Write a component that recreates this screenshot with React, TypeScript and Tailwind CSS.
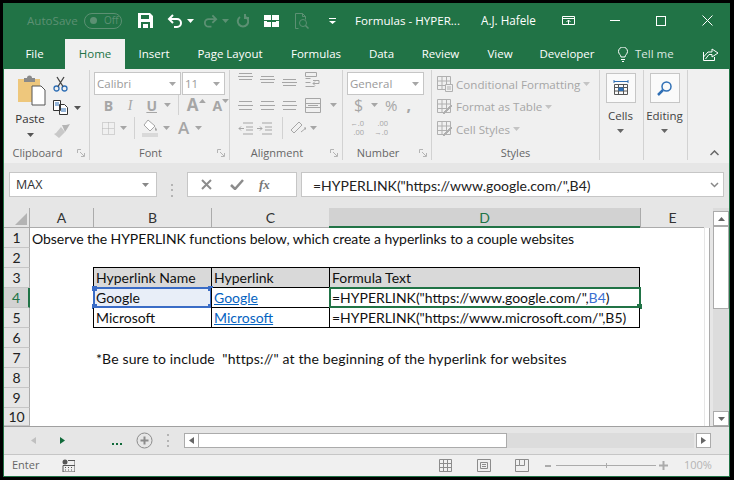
const UI = "font-['Open_Sans','Noto_Sans',sans-serif]";
const CELL = "font-['Lato','Open_Sans',sans-serif] text-[14px]";

const GREY = "#a6a6a6";

function Caret({ color = "#a6a6a6", className = "" }: { color?: string; className?: string }) {
  return (
    <svg width="7" height="4" viewBox="0 0 7 4" className={className}>
      <path d="M0 0h7L3.5 4z" fill={color} />
    </svg>
  );
}

function Launcher({ color = "#b4b4b4" }: { color?: string }) {
  return (
    <svg width="8" height="8" viewBox="0 0 8 8" fill="none" stroke={color}>
      <path d="M.5 4V.5H4M3 3l4 4M7.5 4v3.5H4" />
    </svg>
  );
}

function TitleIcons() {
  const dim = "#5c9073";
  return (
    <div className="flex items-center">
      <div className="ml-[23px] w-[50px] text-[11.6px] whitespace-nowrap text-[#5c9073]">AutoSave</div>
      <div className="ml-[7px] flex h-[16px] w-[38px] items-center rounded-full border border-[#5c9073] pl-[5px] text-[10px] text-[#5c9073]">
        <span className="h-[7px] w-[7px] rounded-full bg-[#5c9073]" />
        <span className="ml-[7px]">Off</span>
      </div>
      {/* save */}
      <svg width="15" height="15" viewBox="0 0 15 15" className="ml-[16px]">
        <path d="M0 0h12l3 3v12H0z" fill="#fff" />
        <path d="M3 2h8v4H3z" fill="#217346" />
        <path d="M3 9h9v6H3z" fill="#217346" />
        <path d="M5 11h5v4H5z" fill="#fff" />
      </svg>
      {/* undo */}
      <svg width="16" height="14" viewBox="0 0 16 14" fill="none" stroke="#fff" strokeWidth="2" className="ml-[14px]">
        <path d="M6 1 2 5l4 4M2 5h8a4 4 0 0 1 0 8H7" />
      </svg>
      <Caret color="#fff" className="ml-[4px]" />
      {/* redo */}
      <svg width="15" height="14" viewBox="0 0 16 14" fill="none" stroke={dim} strokeWidth="2" className="ml-[9px]">
        <path d="m10 1 4 4-4 4M14 5H6a4 4 0 0 0 0 8h3" />
      </svg>
      <Caret color={dim} className="ml-[4px]" />
      {/* repeat */}
      <svg width="13" height="14" viewBox="0 0 13 14" fill="none" stroke={dim} strokeWidth="2" className="ml-[7px]">
        <path d="M4 3a5.2 5.2 0 1 0 6 0M9 0v4h4" />
      </svg>
      {/* borders */}
      <svg width="15" height="12" viewBox="0 0 15 12" className="ml-[15px]">
        <path d="M0 0h7v5H0zM8 0h7v5H8zM0 6h7v6H0zM8 6h7v6H8z" fill="#fff" />
        <path d="M3 6h9v1H3z" fill="#217346" />
      </svg>
      {/* print preview */}
      <svg width="15" height="16" viewBox="0 0 15 16" fill="none" stroke={dim} className="ml-[16px]">
        <path d="M.5 15.500V.5h7l3 3v3M.5 15.500h3M7.500 .5v3h3" />
        <circle cx="8" cy="10" r="3.500" />
        <path d="m10.500 12.500 3 3" strokeWidth="1.500" />
      </svg>
      <svg width="7" height="6" viewBox="0 0 7 6" className="ml-[19px]">
        <path d="M0 0h7v1H0zM0 3h7L3.500 6z" fill="#fff" />
      </svg>
      <div className="ml-[19px] w-[105px] text-[11.6px] whitespace-nowrap text-white">Formulas - HYPER...</div>
      <div className="ml-[21px] w-[55px] text-[11.7px] whitespace-nowrap text-white">A.J. Hafele</div>
      <svg width="13" height="9" viewBox="0 0 13 9" fill="none" stroke="#fff" className="ml-[26px]">
        <path d="M.5.500h12v8H.5zM.5 2.500h12M6.500 8V4M4.500 6l2-2 2 2" />
      </svg>
      <div className="ml-[35px] h-px w-[10px] bg-white" />
      <div className="ml-[36px] h-[10px] w-[10px] border border-white" />
      <svg width="11" height="11" viewBox="0 0 11 11" stroke="#fff" className="ml-[36px]">
        <path d="m.5.500 10 10M10.500.500l-10 10" />
      </svg>
    </div>
  );
}

function TabBar() {
  const tabs: [string, string][] = [
    ["File", "w-[61px]"],
    ["Home", "w-[60px] bg-[#f0f0f0] !text-[#217346]"],
    ["Insert", "w-[58px]"],
    ["Page Layout", "w-[94px]"],
    ["Formulas", "w-[78px]"],
    ["Data", "w-[53px]"],
    ["Review", "w-[65px]"],
    ["View", "w-[54px]"],
    ["Developer", "w-[80px]"],
  ];
  return (
    <div className="flex h-[30px] items-stretch text-[11.5px] text-white">
      {tabs.map(([label, cls]) => (
        <div key={label} className={`flex items-center justify-center whitespace-nowrap ${cls}`}>
          {label}
        </div>
      ))}
      <svg width="10" height="15" viewBox="0 0 10 15" fill="none" stroke="#fff" className="ml-[11px] self-center">
        <path d="M3 10C3 8 .5 7 .5 4.500a4.500 4.500 0 0 1 9 0C9.500 7 7 8 7 10zM3 12.500h4M4 14.500h2" />
      </svg>
      <div className="ml-[7px] flex items-center whitespace-nowrap text-[#dce9e2]">Tell me</div>
      <svg width="16" height="14" viewBox="0 0 16 14" fill="none" stroke="#fff" className="ml-[29px] self-center">
        <path d="M.5 5v8.500h11V10M.5 10 5 5h4V2l6 4-6 4V7.500H6L2.500 12" />
      </svg>
    </div>
  );
}

function Group({ w, label, launcher, children }: { w: string; label: string; launcher?: boolean; children: React.ReactNode }) {
  return (
    <div className={`flex h-[90px] shrink-0 flex-col border-r border-[#d2d2d2] ${w}`}>
      <div className="h-[76px] overflow-visible">{children}</div>
      <div className={`relative flex h-[14px] items-center justify-center text-[11px] whitespace-nowrap text-[#666] ${launcher ? "pr-[18px]" : ""}`}>
        {label}
        {launcher && (
          <span className="absolute right-[4px] top-[3px] flex">
            <Launcher />
          </span>
        )}
      </div>
    </div>
  );
}

function ClipboardGroup() {
  return (
    <div className="flex pl-[13px] pt-[5px]">
      <div className="flex w-[29px] flex-col items-center">
        <svg width="29" height="31" viewBox="0 0 29 31" className="shrink-0">
          <path d="M1 4h22v23H1z" fill="#eec77c" />
          <path d="M7 3h3a2.500 2.500 0 0 1 5 0h3v4H7z" fill="#8a8a8a" />
          <path d="M15 11h9l4 4v15H15z" fill="#fff" stroke="#555" />
        </svg>
        <div className="mr-[3px] mt-[4px] text-[11.5px] leading-[18px] text-[#333]">Paste</div>
        <Caret color="#555" className="mr-[3px] mt-[5px]" />
      </div>
      <div className="ml-[7px] flex flex-col pt-[1px]">
        <svg width="15" height="16" viewBox="0 0 15 16" fill="none" stroke="#2f6fb5" strokeWidth="1.300">
          <circle cx="3.500" cy="12.500" r="2.500" />
          <circle cx="11.500" cy="12.500" r="2.500" />
          <path d="M5 10.500 11 1M10 10.500 4 1" stroke="#444" />
        </svg>
        <div className="mt-[8px] flex items-center">
          <svg width="15" height="15" viewBox="0 0 15 15" fill="#fff" stroke="#333">
            <path d="M.5.500h7v10h-7zM6.500 4.500h5l3 3v7h-8z" />
            <path d="M2 3h4M2 5h4M8 9h5M8 11h5" stroke="#2f6fb5" />
          </svg>
          <Caret color="#555" className="ml-[6px]" />
        </div>
        <svg width="17" height="14" viewBox="0 0 17 14" className="mt-[9px]">
          <path d="M9 1h4l4-1-3 5-2 3z" fill="#b5b5b5" />
          <path d="M8 3 12 8 6 14 1 10l2-1z" fill="#c8c8c8" />
        </svg>
      </div>
    </div>
  );
}

function BoxField({ w, text }: { w: string; text: string }) {
  return (
    <div className={`flex h-[23px] items-center justify-between border border-[#c6c6c6] bg-white pl-[2px] pr-[4px] text-[11.5px] text-[#9a9a9a] ${w}`}>
      <span>{text}</span>
      <Caret />
    </div>
  );
}

function FontGroup() {
  return (
    <div className="flex flex-col pl-[4px] pt-[2px]">
      <div className="flex gap-[1px]">
        <BoxField w="w-[87px]" text="Calibri" />
        <BoxField w="w-[43px]" text="11" />
      </div>
      <div className="flex h-[20px] items-center text-[14px] text-[#a6a6a6]">
        <span className="ml-[6px] w-[17px] text-center font-bold">B</span>
        <span className="ml-[5px] w-[17px] text-center font-['Liberation_Serif',serif] italic">I</span>
        <span className="ml-[5px] w-[17px] text-center font-bold underline">U</span>
        <Caret className="ml-[4px]" />
        <div className="ml-[7px] h-[20px] w-px bg-[#d2d2d2]" />
        <span className="ml-[8px] text-[17px] font-bold">A</span>
        <Caret className="mb-[9px] rotate-180" />
        <span className="ml-[7px] text-[14px] font-bold">A</span>
        <Caret className="mb-[9px]" />
      </div>
      <div className="mt-[2px] flex h-[22px] items-center text-[#a6a6a6]">
        <svg width="13" height="13" viewBox="0 0 13 13" fill="none" stroke="#b4b4b4" strokeDasharray="1 1" className="ml-[8px]">
          <path d="M.5.500h12v12H.5zM6.500.500v12M.5 6.500h12" />
        </svg>
        <Caret className="ml-[5px]" />
        <div className="ml-[7px] h-[22px] w-px bg-[#d2d2d2]" />
        <svg width="16" height="18" viewBox="0 0 16 18" className="ml-[7px]">
          <path d="m6 1 7 6-5 5-6-6z" fill="#fff" stroke="#a6a6a6" />
          <path d="M13 8c1 1 2 2 2 3s-2 1-2 0z" fill="#a6a6a6" />
          <path d="M0 14h16v4H0z" fill="#d9d9d9" />
        </svg>
        <Caret className="ml-[5px]" />
        <span className="ml-[8px] text-[17px] font-semibold">A</span>
        <Caret className="ml-[6px]" />
      </div>
    </div>
  );
}

function Lines({ rows }: { rows: number[] }) {
  return (
    <svg width="15" height="15" viewBox="0 0 15 15" stroke={GREY}>
      {rows.map((y, i) => (
        <path key={y} d={`M${i === 1 ? 0 : 1} ${y + 0.5}h${i === 1 ? 15 : 13}`} />
      ))}
    </svg>
  );
}

function AlignmentGroup() {
  return (
    <div className="flex flex-col pl-[8px] pt-[2px]">
      <div className="flex h-[15px] items-center gap-[7px]">
        <Lines rows={[1, 4, 7]} />
        <Lines rows={[4, 7, 10]} />
        <Lines rows={[7, 10, 13]} />
        <svg width="16" height="16" viewBox="0 0 16 16" fill="none" stroke={GREY} className="ml-[1px]">
          <path d="M.5.500h11v4H.5zM.5 6.500h5M.5 10.500h5M.5 14.500h9M8 8.500h6v3H8M10 9.500l-2 2 2 2" />
        </svg>
      </div>
      <div className="mt-[8px] flex h-[20px] items-center gap-[7px]">
        <Lines rows={[3, 7, 11]} />
        <Lines rows={[3, 7, 11]} />
        <Lines rows={[3, 7, 11]} />
        <svg width="16" height="15" viewBox="0 0 16 15" fill="none" stroke={GREY} className="ml-[1px]">
          <path d="M.5.500h15v14H.5zM.5 5.500h15M.5 9.500h15M3 7.500h10" />
        </svg>
        <Caret className="ml-[2px]" />
      </div>
      <div className="mt-[2px] flex h-[22px] items-center">
        <svg width="15" height="13" viewBox="0 0 15 13" fill="none" stroke={GREY}>
          <path d="M5 1h10M8 5h7M8 8h7M5 12h10M6 6.500H1M3 4.500l-2 2 2 2" />
        </svg>
        <svg width="15" height="13" viewBox="0 0 15 13" fill="none" stroke={GREY} className="ml-[4px]">
          <path d="M5 1h10M8 5h7M8 8h7M5 12h10M0 6.500h5M3 4.500l2 2-2 2" />
        </svg>
        <div className="ml-[10px] h-[22px] w-px bg-[#d2d2d2]" />
        <svg width="16" height="15" viewBox="0 0 16 15" fill="none" stroke={GREY} className="ml-[7px]">
          <path d="m1 9 8-8 3 3-8 8zM11 11l5-4M14 7h2v2" />
        </svg>
        <Caret className="ml-[4px]" />
      </div>
    </div>
  );
}

function NumberGroup() {
  return (
    <div className="flex flex-col pl-[4px] pt-[2px]">
      <BoxField w="w-[77px]" text="General" />
      <div className="flex h-[20px] items-center text-[16px] text-[#a6a6a6]">
        <span className="ml-[7px] w-[9px] text-center">$</span>
        <Caret className="ml-[8px]" />
        <span className="ml-[7px] text-[15px]">%</span>
        <span className="ml-[9px] font-bold">,</span>
      </div>
      <div className="mt-[2px] flex h-[22px] items-center text-[7.5px] leading-[9px] whitespace-nowrap text-[#a6a6a6]">
        <span className="ml-[3px] w-[14px] text-right">
          ←.0
          <br />
          .00
        </span>
        <span className="ml-[10px] w-[14px] text-right">
          .00
          <br />
          →.0
        </span>
      </div>
    </div>
  );
}

function StyleRow({ label, kind }: { label: string; kind: "cond" | "table" | "cell" }) {
  return (
    <div className="flex h-[22.5px] items-center">
      <svg width="16" height="16" viewBox="0 0 16 16" fill="none" stroke="#b0b0b0">
        <path d="M.5.500h13v13H.5zM.5 5h13M.5 9.500h13M5 .5v13M9.500 .5v13" />
        {kind === "cond" ? (
          <path d="M8.500 8.500h7v7h-7zM10 11h4M10 13h4" fill="#f0f0f0" />
        ) : (
          <path d="m7 15 8-8-1-1-8 8z" fill="#b0b0b0" />
        )}
      </svg>
      <span className="ml-[3px] text-[11.6px] whitespace-nowrap text-[#a6a6a6]">{label}</span>
      <Caret color="#c4c4c4" className="ml-[3px]" />
    </div>
  );
}

function BigButton({ label, children }: { label: string; children: React.ReactNode }) {
  return (
    <div className="flex flex-col items-center pr-[2px] pt-[3px]">
      <div className="flex h-[30px] w-[30px] items-center justify-center border border-[#c6c6c6] bg-[#fafafa]">{children}</div>
      <div className="mt-[4px] text-[11.5px] leading-[18px] whitespace-nowrap text-[#444]">{label}</div>
      <Caret color="#666" className="mt-[4px]" />
    </div>
  );
}

function Ribbon() {
  return (
    <div className="flex h-[94px] items-start bg-[#f0f0f0] pt-[1px] text-[#444]">
      <Group w="w-[86px]" label="Clipboard" launcher>
        <ClipboardGroup />
      </Group>
      <Group w="w-[140px]" label="Font" launcher>
        <FontGroup />
      </Group>
      <Group w="w-[113px]" label="Alignment" launcher>
        <AlignmentGroup />
      </Group>
      <Group w="w-[89px]" label="Number" launcher>
        <NumberGroup />
      </Group>
      <Group w="w-[168px]" label="Styles">
        <div className="flex flex-col pl-[5px] pt-[3px]">
          <StyleRow label="Conditional Formatting" kind="cond" />
          <StyleRow label="Format as Table" kind="table" />
          <StyleRow label="Cell Styles" kind="cell" />
        </div>
      </Group>
      <Group w="w-[44px]" label="">
        <BigButton label="Cells">
          <svg width="16" height="16" viewBox="0 0 16 16" fill="none" stroke="#555">
            <path d="M1 1.500h14M1 0v3M15 0v3" stroke="#2f6fb5" />
            <path d="M1.500 4.500h13v10h-13zM1.500 7.500h13M1.500 11h13M5.500 4.500v10M10.500 4.500v10" />
            <path d="M5.500 7.500h5V11h-5z" fill="#2f6fb5" stroke="none" />
          </svg>
        </BigButton>
      </Group>
      <Group w="w-[44px]" label="">
        <BigButton label="Editing">
          <svg width="15" height="15" viewBox="0 0 15 15" fill="none" stroke="#2f6fb5" strokeWidth="1.500">
            <circle cx="9.500" cy="5.500" r="4.500" />
            <path d="m6 9-5 5" strokeWidth="2.500" />
          </svg>
        </BigButton>
      </Group>
      <div className="flex h-[90px] flex-1 items-end justify-end pb-[4px] pr-[10px]">
        <svg width="9" height="6" viewBox="0 0 9 6" fill="none" stroke="#666" strokeWidth="1.500">
          <path d="m.5 5 4-4 4 4" />
        </svg>
      </div>
    </div>
  );
}

function FormulaBar() {
  return (
    <div className="flex h-[45px] items-start bg-[#e6e6e6] pl-[5px] pr-[5px] pt-[9px]">
      <div className="flex h-[25px] w-[148px] items-center justify-between border border-[#c6c6c6] bg-white pl-[6px] pr-[7px] pt-[1px] text-[12.5px] text-[#333]">
        MAX
        <Caret color="#888" />
      </div>
      <div className="ml-[14px] flex h-[13px] w-[2px] flex-col justify-between self-center">
        <span className="h-[2px] bg-[#b4b4b4]" />
        <span className="h-[2px] bg-[#b4b4b4]" />
        <span className="h-[2px] bg-[#b4b4b4]" />
      </div>
      <div className="ml-[14px] flex h-[25px] w-[110px] items-center border border-[#c6c6c6] bg-white">
        <svg width="11" height="11" viewBox="0 0 11 11" stroke="#8c8c8c" strokeWidth="2" className="ml-[13px]">
          <path d="m1 1 9 9M10 1l-9 9" />
        </svg>
        <svg width="14" height="11" viewBox="0 0 14 11" fill="none" stroke="#8c8c8c" strokeWidth="2.500" className="ml-[18px]">
          <path d="m1 6 4 4 8-9" />
        </svg>
        <span className="ml-[15px] font-['Liberation_Serif',serif] text-[13px] font-bold italic text-[#777]">fx</span>
      </div>
      <div className="ml-[4px] flex h-[25px] flex-1 items-center justify-between border border-[#c6c6c6] bg-white pl-[11px] pr-[4px]">
        <span className={`${CELL} whitespace-nowrap pt-[1px] text-[#222]`}>=HYPERLINK("https://www.google.com/",B4)</span>
        <svg width="9" height="6" viewBox="0 0 9 6" fill="none" stroke="#888" strokeWidth="1.500">
          <path d="m1 1 3.500 3.500L8 1" />
        </svg>
      </div>
    </div>
  );
}

const COLS = [
  { name: "A", w: "w-[63px]" },
  { name: "B", w: "w-[118px]" },
  { name: "C", w: "w-[118px]" },
  { name: "D", w: "w-[311px]" },
  { name: "E", w: "w-[64px]" },
];

function Handle({ pos, color }: { pos: string; color: string }) {
  return <span className={`absolute h-[5px] w-[5px] ${pos} ${color}`} />;
}

type RowDef = {
  n: number;
  h?: string;
  cells?: React.ReactNode[];
  table?: boolean;
  head?: boolean;
  bottomOnly?: boolean;
};

const LINK = "text-[#0563c1] underline";

const ROWS: RowDef[] = [
  {
    n: 1,
    cells: [
      <span className="tracking-[-0.06px]">Observe the HYPERLINK functions below, which create a hyperlinks to a couple websites</span>,
    ],
  },
  { n: 2, bottomOnly: true },
  { n: 3, table: true, head: true, cells: ["", "Hyperlink Name", "Hyperlink", "Formula Text"] },
  {
    n: 4,
    table: true,
    cells: [
      "",
      "Google",
      <span className={LINK}>Google</span>,
      <>
        =HYPERLINK("https://www.google.com/",<span className="text-[#3b6fd1]">B4</span>)
      </>,
    ],
  },
  {
    n: 5,
    table: true,
    cells: ["", "Microsoft", <span className={LINK}>Microsoft</span>, '=HYPERLINK("https://www.microsoft.com/",B5)'],
  },
  { n: 6 },
  {
    n: 7,
    cells: [
      "",
      <span className="ml-[1px] tracking-[0.14px] whitespace-pre">*Be sure to include  "https://" at the beginning of the hyperlink for websites</span>,
    ],
  },
  { n: 8 },
  { n: 9 },
  { n: 10, h: "h-[18px]" },
];

function Sheet() {
  return (
    <div className="flex h-[218px] bg-[#e6e6e6]">
      <div className="flex w-[704px] flex-col">
        <div className="flex h-[20px]">
          <div className="flex w-[26px] items-end justify-end border-r border-b border-[#ababab] p-[2px]">
            <svg width="12" height="12" viewBox="0 0 12 12">
              <path d="M12 0v12H0z" fill="#b4b4b4" />
            </svg>
          </div>
          {COLS.map((c) => (
            <div
              key={c.name}
              className={`${c.w} ${CELL} flex items-center justify-center ${
                c.name === "D"
                  ? "border-b-2 border-[#217346] bg-[#d2d2d2] text-[#217346]"
                  : `border-b border-[#ababab] text-[#333] ${c.name === "A" ? "" : "border-l"}`
              }`}
            >
              {c.name}
            </div>
          ))}
        </div>
        {ROWS.map((r) => (
          <div key={r.n} className={`flex ${r.h ?? "h-[20px]"}`}>
            <div
              className={`${CELL} flex w-[26px] items-center justify-center border-b border-[#c6c6c6] ${
                r.n === 4 ? "border-r-2 border-r-[#217346] bg-[#d2d2d2] text-[#217346]" : "border-r border-r-[#ababab] text-[#222]"
              }`}
            >
              {r.n}
            </div>
            {COLS.map((c, i) => {
              const inTable = i >= 1 && i <= 3;
              const bordered = (r.table || r.bottomOnly) && inTable;
              const selB = r.n === 4 && i === 1;
              const selD = r.n === 4 && i === 3;
              // filled cells sit above their neighbours so long text can run over them
              const raised = selB || selD || !!r.cells?.[i];
              const bg = selB ? "bg-[#e8eef8]" : r.head && inTable ? "bg-[#d9d9d9]" : "bg-white";
              return (
                <div
                  key={c.name}
                  className={`${c.w} ${CELL} ${bg} flex items-center pl-[2px] whitespace-nowrap text-[#111] ${
                    raised ? "relative z-10" : ""
                  } ${bordered ? "border-b border-black" : ""} ${r.table && inTable ? "border-l border-black" : ""} ${
                    r.table && i === 3 ? "border-r border-black" : ""
                  }`}
                >
                  {r.cells?.[i]}
                  {selB && (
                    <span className="absolute -top-[1px] -left-[1px] h-[21px] w-[119px] border-2 border-[#3a6cc6]">
                      <Handle pos="-top-[3px] -left-[3px]" color="bg-[#3a6cc6]" />
                      <Handle pos="-top-[3px] -right-[3px]" color="bg-[#3a6cc6]" />
                      <Handle pos="-bottom-[3px] -left-[3px]" color="bg-[#3a6cc6]" />
                      <Handle pos="-bottom-[3px] -right-[3px]" color="bg-[#3a6cc6]" />
                    </span>
                  )}
                  {selD && (
                    <span className="absolute -top-[1px] -left-[1px] h-[21px] w-[312px] border-2 border-[#217346]">
                      <Handle pos="-bottom-[3px] -right-[3px]" color="bg-[#217346]" />
                    </span>
                  )}
                </div>
              );
            })}
          </div>
        ))}
      </div>
      <div className="mt-[20px] w-[5px] border-r border-[#ababab] bg-white" />
      <div className="ml-[3px] flex w-[16px] flex-col bg-[#dcdcdc] pt-[3px]">
        <div className="flex h-[15px] items-center justify-center border border-[#ababab] bg-white">
          <Caret color="#666" className="rotate-180" />
        </div>
        <div className="h-[83px] border border-[#ababab] bg-white" />
        <div className="flex-1" />
        <div className="flex h-[15px] items-center justify-center border border-[#ababab] bg-white">
          <Caret color="#666" />
        </div>
      </div>
    </div>
  );
}

function SheetTabs() {
  return (
    <div className="flex h-[28px] items-center border-t border-[#a0a0a0] bg-[#e6e6e6]">
      <svg width="5" height="7" viewBox="0 0 5 7" className="ml-[27px]">
        <path d="M5 0v7L0 3.500z" fill="#c0c0c0" />
      </svg>
      <svg width="5" height="7" viewBox="0 0 5 7" className="ml-[24px]">
        <path d="M0 0v7l5-3.500z" fill="#116a3a" />
      </svg>
      <div className="ml-[47px] mt-[6px] flex gap-[2px]">
        <span className="h-[2px] w-[2px] bg-[#116a3a]" />
        <span className="h-[2px] w-[2px] bg-[#116a3a]" />
        <span className="h-[2px] w-[2px] bg-[#116a3a]" />
      </div>
      <svg width="17" height="17" viewBox="0 0 17 17" fill="none" stroke="#8c8c8c" className="ml-[14px]">
        <circle cx="8.500" cy="8.500" r="7.500" />
        <path d="M4.500 8.500h8M8.500 4.500v8" strokeWidth="2" />
      </svg>
      <div className="ml-[14px] flex h-[13px] w-[2px] flex-col justify-between">
        <span className="h-[2px] bg-[#b4b4b4]" />
        <span className="h-[2px] bg-[#b4b4b4]" />
        <span className="h-[2px] bg-[#b4b4b4]" />
      </div>
      <div className="ml-[15px] flex h-[15px] w-[510px] bg-[#dcdcdc]">
        <div className="flex w-[15px] items-center justify-center border border-[#ababab] bg-white">
          <svg width="5" height="7" viewBox="0 0 5 7">
            <path d="M5 0v7L0 3.500z" fill="#666" />
          </svg>
        </div>
        <div className="w-[308px] border border-l-0 border-[#ababab] bg-white" />
      </div>
      <div className="ml-[2px] flex h-[15px] w-[15px] items-center justify-center border border-[#ababab] bg-white">
        <svg width="5" height="7" viewBox="0 0 5 7">
          <path d="M0 0v7l5-3.500z" fill="#666" />
        </svg>
      </div>
    </div>
  );
}

function StatusBar() {
  return (
    <div className="flex h-[22px] items-center border-t border-[#c6c6c6] bg-[#f0f0f0] text-[11px] text-[#666]">
      <span className="ml-[8px] w-[28px]">Enter</span>
      <svg width="13" height="13" viewBox="0 0 13 13" className="ml-[22px]">
        <circle cx="3" cy="3" r="2.500" fill="#555" />
        <path d="M6 1.500h7v11.500H1V6.500h12" fill="none" stroke="#555" />
        <path d="M3 8h1v1H3zM6 8h1v1H6zM9 8h1v1H9zM3 10.500h1v1H3zM6 10.500h1v1H6zM9 10.500h1v1H9z" fill="#555" />
      </svg>
      <svg width="13" height="13" viewBox="0 0 13 13" fill="none" stroke="#8c8c8c" className="ml-[364px]">
        <path d="M.5.500h12v12H.5zM.5 4.500h12M.5 8.500h12M4.500 .5v12M8.500 .5v12" />
      </svg>
      <svg width="14" height="13" viewBox="0 0 14 13" fill="none" stroke="#8c8c8c" className="ml-[25px]">
        <path d="M.5.500h13v12H.5zM3.500 3.500h7v6h-7zM5 5.500h4M5 7.500h4" />
      </svg>
      <svg width="14" height="13" viewBox="0 0 14 13" fill="none" stroke="#8c8c8c" className="ml-[24px]">
        <path d="M.5.500h13v12H.5zM4.500 .5v6h5v-6M.5 6.500h4" />
      </svg>
      <span className="ml-[16px] h-[2px] w-[6px] bg-[#ababab]" />
      <div className="relative ml-[5px] flex h-[5px] w-[100px] items-center">
        <span className="h-px w-full bg-[#ababab]" />
        <span className="absolute left-[50px] h-[5px] w-px bg-[#ababab]" />
      </div>
      <svg width="9" height="9" viewBox="0 0 9 9" className="ml-[3px]">
        <path d="M3.500 0h2v3.500H9v2H5.500V9h-2V5.500H0v-2h3.500z" fill="#ababab" />
      </svg>
      <span className="ml-[16px] text-[#b4b4b4]">100%</span>
    </div>
  );
}

export default function App() {
  return (
    <div className={`${UI} h-[480px] w-[734px] overflow-hidden bg-black pt-[3px] pl-[3px] pr-[4px] pb-[3px]`}>
      <div className="flex h-[474px] flex-col border-x border-b border-[#217346] bg-[#217346]">
        <div className="flex h-[36px] items-center">
          <TitleIcons />
        </div>
        <TabBar />
        <Ribbon />
        <FormulaBar />
        <Sheet />
        <SheetTabs />
        <StatusBar />
      </div>
    </div>
  );
}
